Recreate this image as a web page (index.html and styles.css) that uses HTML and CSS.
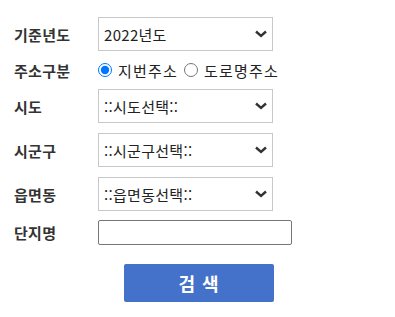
FILE: index.html
```html
<!DOCTYPE html>
<html lang="ko">
<head>
    <meta charset="UTF-8">
    <title>단지 검색</title>
    <link rel="stylesheet" href="styles.css">
</head>
<body>
    <div class="search-form">
        <!-- 기준년도 -->
        <div class="row">
            <label class="label" for="year">기준년도</label>
            <div class="select-box">
                <select id="year" class="field-select">
                    <option>2022년도</option>
                    <option>2021년도</option>
                </select>
                <svg class="arrow" width="12" height="8" viewBox="0 0 12 8"><path d="M1 1.5 L6 6 L11 1.5" fill="none" stroke="#333" stroke-width="2.4"/></svg>
            </div>
        </div>

        <!-- 주소구분 -->
        <div class="row row-radio">
            <span class="label">주소구분</span>
            <label class="radio"><input type="radio" name="addrType" checked> 지번주소</label>
            <label class="radio"><input type="radio" name="addrType"> 도로명주소</label>
        </div>

        <div class="row">
            <label class="label" for="sido">시도</label>
            <div class="select-box">
                <select id="sido" class="field-select">
                    <option>::시도선택::</option>
                </select>
                <svg class="arrow" width="12" height="8" viewBox="0 0 12 8"><path d="M1 1.5 L6 6 L11 1.5" fill="none" stroke="#333" stroke-width="2.4"/></svg>
            </div>
        </div>

        <div class="row">
            <label class="label" for="sigungu">시군구</label>
            <div class="select-box">
                <select id="sigungu" class="field-select">
                    <option>::시군구선택::</option>
                </select>
                <svg class="arrow" width="12" height="8" viewBox="0 0 12 8"><path d="M1 1.5 L6 6 L11 1.5" fill="none" stroke="#333" stroke-width="2.4"/></svg>
            </div>
        </div>

        <div class="row">
            <label class="label" for="emd">읍면동</label>
            <div class="select-box">
                <select id="emd" class="field-select">
                    <option>::읍면동선택::</option>
                </select>
                <svg class="arrow" width="12" height="8" viewBox="0 0 12 8"><path d="M1 1.5 L6 6 L11 1.5" fill="none" stroke="#333" stroke-width="2.4"/></svg>
            </div>
        </div>

        <div class="row row-input">
            <label class="label" for="aptName">단지명</label>
            <input type="text" id="aptName" class="field-text">
        </div>

        <div class="btn-area">
            <button type="button" class="search-button">검 색</button>
        </div>
    </div>
</body>
</html>
```

FILE: styles.css
```css
/* 기본 스타일 */
body {
    margin: 0;
    font-family: "Noto Sans CJK KR", "Noto Sans", sans-serif;
    color: #222;
    background-color: #fff;
}

.search-form {
    padding: 17px 0 0 14px;
}

.row {
    display: flex;
    align-items: center;
    margin-bottom: 10px;
}

.label {
    flex-shrink: 0;
    width: 84px;
    font-size: 15px;
    font-weight: bold;
    letter-spacing: 0.3px;
    color: #333;
}

/* 셀렉트 박스 */
.select-box {
    position: relative;
    width: 175px;
    height: 34px;
}

.field-select {
    appearance: none;
    -webkit-appearance: none;
    width: 100%;
    height: 100%;
    box-sizing: border-box;
    padding: 0 26px 0 5px;
    font-family: inherit;
    font-size: 15px;
    letter-spacing: 0.3px;
    color: #222;
    border: 1px solid #c8c8c8;
    border-radius: 0;
    background-color: #fff;
    outline: none;
}

.arrow {
    position: absolute;
    right: 6px;
    top: 13px;
    pointer-events: none;
}

/* 주소구분 라디오 */
.row-radio {
    height: 18px;
}

.radio {
    display: flex;
    align-items: center;
    flex-shrink: 0;
    font-size: 15px;
    letter-spacing: 1.2px;
    margin-right: 6px;
    white-space: nowrap;
}

.radio input {
    margin: 0 6px 0 0;
    width: 14px;
    height: 14px;
}

.row-input {
    margin-top: -1px;
    margin-bottom: 19px;
}

.field-text {
    width: 194px;
    height: 25px;
    box-sizing: border-box;
    border: 1px solid #767676;
    border-radius: 2px;
    font-size: 14px;
}

.btn-area {
    padding-left: 110px;
}

.search-button {
    width: 150px;
    height: 38px;
    border: none;
    border-radius: 2px;
    background-color: #4472ca;
    color: #fff;
    font-family: inherit;
    font-size: 18px;
    font-weight: bold;
    letter-spacing: 1px;
    cursor: pointer;
}
```
